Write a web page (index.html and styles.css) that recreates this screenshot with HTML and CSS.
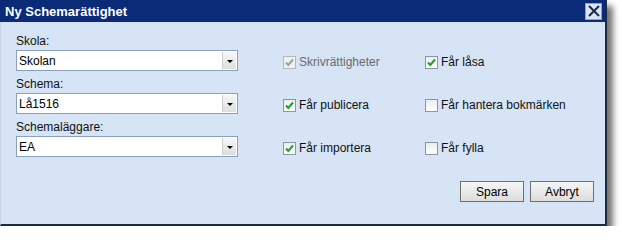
FILE: index.html
```html
<!DOCTYPE html>
<html lang="sv">
<head>
<meta charset="utf-8">
<title>Ny Schemarättighet</title>
<link rel="stylesheet" href="styles.css">
</head>
<body>
<div class="window">
  <div class="titlebar">
    <span class="title">Ny Schemarättighet</span>
    <span class="close"><svg width="14" height="14" viewBox="0 0 14 14"><path d="M2 2 L12 12 M12 2 L2 12" stroke="#1b2a4e" stroke-width="2" fill="none"/></svg></span>
  </div>
  <div class="body">
    <div class="main">
      <div class="fields">
        <div class="field">
          <div class="label">Skola:</div>
          <div class="select"><span class="value">Skolan</span><span class="arrow"><i></i></span></div>
        </div>
        <div class="field">
          <div class="label">Schema:</div>
          <div class="select"><span class="value">Lå1516</span><span class="arrow"><i></i></span></div>
        </div>
        <div class="field">
          <div class="label">Schemaläggare:</div>
          <div class="select"><span class="value">EA</span><span class="arrow"><i></i></span></div>
        </div>
      </div>
      <div class="checks">
        <div class="check disabled"><span class="box"><svg width="13" height="13" viewBox="0 0 13 13"><path d="M3 6.5 L5.3 9 L10 3.5" stroke="#a0a0a0" stroke-width="2" fill="none"/></svg></span><span class="text">Skrivrättigheter</span></div>
        <div class="check"><span class="box"><svg width="13" height="13" viewBox="0 0 13 13"><path d="M3 6.5 L5.3 9 L10 3.5" stroke="#1f9e2a" stroke-width="2" fill="none"/></svg></span><span class="text">Får låsa</span></div>
        <div class="check"><span class="box"><svg width="13" height="13" viewBox="0 0 13 13"><path d="M3 6.5 L5.3 9 L10 3.5" stroke="#1f9e2a" stroke-width="2" fill="none"/></svg></span><span class="text">Får publicera</span></div>
        <div class="check"><span class="box"></span><span class="text">Får hantera bokmärken</span></div>
        <div class="check"><span class="box"><svg width="13" height="13" viewBox="0 0 13 13"><path d="M3 6.5 L5.3 9 L10 3.5" stroke="#1f9e2a" stroke-width="2" fill="none"/></svg></span><span class="text">Får importera</span></div>
        <div class="check"><span class="box"></span><span class="text">Får fylla</span></div>
      </div>
    </div>
    <div class="actions">
      <button class="btn">Spara</button>
      <button class="btn">Avbryt</button>
    </div>
  </div>
</div>
</body>
</html>
```

FILE: styles.css
```css
html, body {
  margin: 0;
  padding: 0;
  background: #ffffff;
}

body {
  font-family: "Liberation Sans", Arial, sans-serif;
  font-size: 12px;
  color: #000;
}

.window {
  width: 607px;
  height: 226px;
  box-sizing: border-box;
  display: flex;
  flex-direction: column;
  background: #d6e4f6;
  border-left: 1px solid #c4d2e6;
  border-right: 2px solid #1e2a44;
  border-bottom: 2px solid #1e2a44;
  box-shadow: 6px 6px 6px rgba(0, 0, 0, 0.55);
}

.titlebar {
  flex-shrink: 0;
  height: 22px;
  background: #0b2a78;
  display: flex;
  align-items: center;
  justify-content: space-between;
  padding: 0 2px 0 5px;
  margin-left: -1px;
}

.title {
  color: #ffffff;
  font-weight: bold;
  font-size: 13px;
  font-family: "Liberation Sans", Arial, sans-serif;
}

.close {
  width: 17px;
  height: 17px;
  box-sizing: border-box;
  background: #d9e4f4;
  border: 1px solid #8fa3c6;
  display: flex;
  align-items: center;
  justify-content: center;
  margin-right: 1px;
}

.body {
  flex: 1;
  display: flex;
  flex-direction: column;
  padding: 12px 0 0 15px;
}

.main {
  display: flex;
}

.fields {
  width: 222px;
  display: flex;
  flex-direction: column;
  gap: 6px;
}

.label {
  line-height: 15px;
  height: 15px;
  margin-bottom: 1px;
  color: #111;
}

.select {
  height: 21px;
  box-sizing: border-box;
  border: 1px solid #8aa0c0;
  background: #ffffff;
  display: flex;
  align-items: center;
  justify-content: space-between;
}

.value {
  padding-left: 2px;
  color: #000;
}

.arrow {
  width: 14px;
  height: 17px;
  margin-right: 1px;
  box-sizing: border-box;
  background: linear-gradient(#f7f7f7, #dedede);
  border-left: 1px solid #d0d0d0;
  display: flex;
  align-items: center;
  justify-content: center;
}

.arrow i {
  width: 0;
  height: 0;
  border-left: 3px solid transparent;
  border-right: 3px solid transparent;
  border-top: 3px solid #000;
  margin-top: 2px;
}

.checks {
  margin-left: 45px;
  margin-top: 21px;
  display: grid;
  grid-template-columns: 142px auto;
  grid-auto-rows: 15px;
  row-gap: 28px;
  align-content: start;
}

.check {
  display: flex;
  align-items: flex-start;
  gap: 3px;
  height: 15px;
  line-height: 15px;
}

.box {
  width: 13px;
  height: 13px;
  box-sizing: border-box;
  border: 1px solid #8c96a3;
  background: linear-gradient(#e9edf2, #ffffff);
  display: flex;
  align-items: center;
  justify-content: center;
  margin-top: 1px;
}

.box svg {
  margin: -1px;
}

.check.disabled .box {
  border-color: #b4b8be;
  background: #eef0f2;
}

.check.disabled .text {
  color: #6a6a6a;
}

.text {
  color: #111;
}

.actions {
  margin-top: auto;
  margin-bottom: 22px;
  margin-right: 11px;
  display: flex;
  justify-content: flex-end;
  gap: 6px;
}

.btn {
  width: 64px;
  height: 21px;
  box-sizing: border-box;
  border: 1px solid #707070;
  background: linear-gradient(#f6f6f6, #dddddd);
  font-family: "Liberation Sans", Arial, sans-serif;
  font-size: 12px;
  color: #000;
  padding: 0;
}
```
